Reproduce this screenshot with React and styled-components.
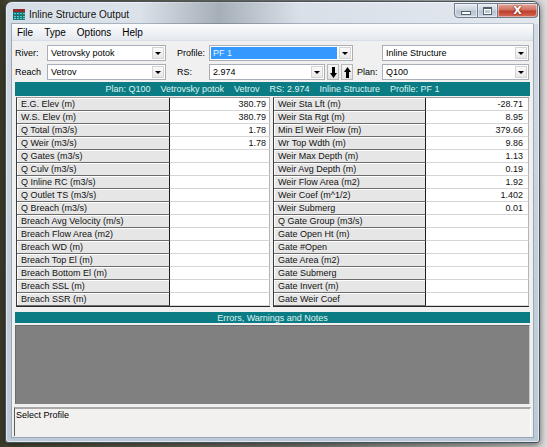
import React from 'react';
import styled, { createGlobalStyle } from 'styled-components';

const Global = createGlobalStyle`
  html, body { margin: 0; padding: 0; }
  body {
    width: 547px; height: 447px; overflow: hidden;
    font-family: "Liberation Sans", Arial, sans-serif;
  }
`;

const Desktop = styled.div`
  width: 547px; height: 447px; box-sizing: border-box; overflow: hidden;
  padding: 1px 0 0 5px;
  background: linear-gradient(90deg, #3b3a27 0px, #4a4833 8px, #5d5b48 120px, #7b7b74 300px, #b9b9b6 480px, #dcdcdc 547px);
`;

const Window = styled.div`
  width: 535px; height: 442px; box-sizing: border-box;
  border: 1px solid #46535f;
  border-radius: 7px 7px 3px 3px;
  background: linear-gradient(180deg, #d5dde6 0%, #c3cfdb 60%, #bccad8 100%);
  box-shadow: 0 2px 7px rgba(0,0,0,0.55), inset 0 0 0 1px rgba(255,255,255,0.55);
  display: flex; flex-direction: column;
  padding: 0 6px 5px 6px;
`;

const TitleBar = styled.div`
  height: 22px; flex: none;
  display: flex; align-items: center;
  position: relative;
  margin: 0 -6px; padding: 0 6px;
  border-radius: 6px 6px 0 0;
  background: linear-gradient(90deg, rgba(255,255,255,0) 0%, rgba(255,255,255,0.15) 25%, rgba(80,88,96,0.35) 40%, rgba(255,255,255,0.1) 55%, rgba(255,255,255,0.35) 100%);
`;

const TitleIcon = styled.svg`
  width: 12px; height: 11px; margin-left: 1px; margin-top: 2px; flex: none;
`;

const TitleText = styled.span`
  margin-left: 4px; margin-top: 2px;
  font-size: 10px; color: #111;
  text-shadow: 0 0 6px rgba(255,255,255,0.9);
`;

const Controls = styled.div`
  position: absolute; right: 1px; top: 1px;
  display: flex;
`;

const CaptionBtn = styled.div`
  height: 15px; width: ${p => p.$w}px; box-sizing: border-box;
  border: 1px solid #6f7d8c;
  border-left-width: ${p => (p.$first ? 1 : 0)}px;
  border-radius: ${p => p.$r};
  display: flex; align-items: center; justify-content: center;
  background: ${p => p.$close
    ? 'linear-gradient(180deg, #e5a99d 0%, #d0705f 45%, #bf3f2c 55%, #d36a55 100%)'
    : 'linear-gradient(180deg, #e6ecf2 0%, #cdd6df 45%, #b8c4d0 55%, #cad5e0 100%)'};
  box-shadow: inset 0 0 0 1px rgba(255,255,255,0.45);
`;

const MinGlyph = styled.div`
  width: 8px; height: 2px; background: #fff; border: 1px solid #56606a; margin-top: 5px;
`;

const MaxGlyph = styled.div`
  width: 7px; height: 5px; border: 1px solid #56606a; border-top-width: 2px;
  box-shadow: inset 0 0 0 1px #fff;
`;

const CloseGlyph = styled.span`
  color: #fff; font-size: 11px; font-weight: bold;
  font-family: "DejaVu Sans", sans-serif;
  text-shadow: 0 0 1px #7a1a10, 0 0 2px #7a1a10;
  line-height: 1;
`;

const Client = styled.div`
  flex: 1; background: #f0f0f0;
  display: flex; flex-direction: column;
  box-shadow: 0 0 0 1px #9aa8b6;
`;

const MenuBar = styled.div`
  height: 17px; flex: none; box-sizing: border-box;
  display: flex; align-items: center; gap: 11px;
  padding-left: 5px;
  background: linear-gradient(180deg, #fbfcfd 0%, #eef1f5 60%, #e4e8ee 100%);
  border-bottom: 1px solid #d8dee6;
`;

const MenuItem = styled.span`
  font-size: 10px; color: #000;
`;

const Body = styled.div`
  flex: 1; display: flex; flex-direction: column;
  padding: 4px 3px 0 3px;
`;

const SelectorGrid = styled.div`
  display: grid;
  grid-template-columns: 32px 119px 43px 144px 29px 147px;
  grid-template-rows: 16px 16px;
  row-gap: 3px;
  align-items: center;
`;

const FieldLabel = styled.span`
  font-size: 9px; color: #000;
  padding-left: ${p => p.$pad || 0}px;
`;

const Combo = styled.div`
  height: 16px; box-sizing: border-box;
  border: 1px solid #a9afb6;
  background: #fff;
  display: flex; align-items: stretch;
  flex: ${p => (p.$grow ? 1 : 'none')};
`;

const ComboText = styled.div`
  flex: 1; display: flex; align-items: center;
  font-size: 9px;
  padding-left: 2px; margin: 1px;
  background: ${p => (p.$selected ? '#3399ff' : 'transparent')};
  color: ${p => (p.$selected ? '#e8f2ff' : '#000')};
  white-space: nowrap; overflow: hidden;
`;

const DropBtn = styled.div`
  width: 10px; flex: none; margin: 1px;
  background: linear-gradient(180deg, #fafafa 0%, #e8e8e8 100%);
  border: 1px solid #d4d4d4;
  display: flex; align-items: center; justify-content: center;
  &::after {
    content: ""; display: block;
    border-left: 3px solid transparent; border-right: 3px solid transparent;
    border-top: 3px solid #000;
    margin-top: 1px;
  }
`;

const RSGroup = styled.div`
  display: flex; align-items: center; gap: 2px;
`;

const ArrowBtn = styled.div`
  width: 12px; height: 16px; box-sizing: border-box; flex: none;
  border: 1px solid #b8b8b8;
  background: linear-gradient(180deg, #f6f6f6 0%, #e2e2e2 100%);
  display: flex; align-items: center; justify-content: center;
`;

const InfoBar = styled.div`
  height: 14px; margin-top: 2px; flex: none;
  background: #0b7c83;
  color: #dff2f2;
  font-size: 9px;
  display: flex; align-items: center; justify-content: center;
  white-space: pre;
`;

const Tables = styled.div`
  display: grid;
  grid-template-columns: 254px 256px;
  column-gap: 3px;
  margin: 1px 0 0 1px;
`;

const Table = styled.div`
  display: grid;
  grid-template-columns: ${p => p.$label}px 1fr;
  grid-auto-rows: 13px;
  border-left: 1px solid #3a3a3a;
  border-top: 1px solid #9a9a9a;
  border-bottom: 1px solid #2a2a2a;
`;

const LabelCell = styled.div`
  box-sizing: border-box;
  background: #e6e6e6;
  border-bottom: 1px solid #6c6c6c;
  border-right: 1px solid #1e1e1e;
  box-shadow: inset 1px 1px 0 #ffffff;
  font-size: 9px; color: #111;
  padding-left: 4px;
  display: flex; align-items: center;
  white-space: nowrap; overflow: hidden;
`;

const ValueCell = styled.div`
  box-sizing: border-box;
  background: #fff;
  border-bottom: 1px solid #d6d6d6;
  border-right: 1px solid #b4b4b4;
  font-size: 9px; color: #111;
  padding-right: ${p => p.$pr}px;
  display: flex; align-items: center; justify-content: flex-end;
`;

const NotesBar = styled.div`
  height: 11px; margin-top: 5px; flex: none;
  background: #0b7c83;
  color: #dff2f2;
  font-size: 9px;
  display: flex; align-items: center; justify-content: center;
`;

const NotesArea = styled.div`
  height: 79px; margin-top: 2px; flex: none;
  background: #808080;
  border-top: 1px solid #6a6a6a;
  border-left: 1px solid #6a6a6a;
  border-right: 1px solid #c8c8c8;
  box-sizing: border-box;
`;

const StatusBox = styled.div`
  flex: 1; margin: 3px -1px 1px -1px; box-sizing: border-box;
  border-top: 2px solid #a8a8a8;
  border-left: 1px solid #5a5a5a;
  border-right: 1px solid #ffffff;
  background: #f2f1f0;
  font-size: 9px; color: #000;
  padding: 1px 0 0 1px;
`;

const leftRows = [
  ['E.G. Elev (m)', '380.79'],
  ['W.S. Elev (m)', '380.79'],
  ['Q Total (m3/s)', '1.78'],
  ['Q Weir (m3/s)', '1.78'],
  ['Q Gates (m3/s)', ''],
  ['Q Culv (m3/s)', ''],
  ['Q Inline RC (m3/s)', ''],
  ['Q Outlet TS (m3/s)', ''],
  ['Q Breach (m3/s)', ''],
  ['Breach Avg Velocity (m/s)', ''],
  ['Breach Flow Area (m2)', ''],
  ['Breach WD (m)', ''],
  ['Breach Top El (m)', ''],
  ['Breach Bottom El (m)', ''],
  ['Breach SSL (m)', ''],
  ['Breach SSR (m)', ''],
];

const rightRows = [
  ['Weir Sta Lft (m)', '-28.71'],
  ['Weir Sta Rgt (m)', '8.95'],
  ['Min El Weir Flow (m)', '379.66'],
  ['Wr Top Wdth (m)', '9.86'],
  ['Weir Max Depth (m)', '1.13'],
  ['Weir Avg Depth (m)', '0.19'],
  ['Weir Flow Area (m2)', '1.92'],
  ['Weir Coef (m^1/2)', '1.402'],
  ['Weir Submerg', '0.01'],
  ['Q Gate Group (m3/s)', ''],
  ['Gate Open Ht (m)', ''],
  ['Gate #Open', ''],
  ['Gate Area (m2)', ''],
  ['Gate Submerg', ''],
  ['Gate Invert (m)', ''],
  ['Gate Weir Coef', ''],
];

const AppIcon = () => (
  <TitleIcon viewBox="0 0 12 11">
    <rect x="0" y="0" width="12" height="11" fill="#1c6f73" />
    <rect x="0" y="0" width="12" height="3" fill="#8e2a2a" />
    {[1, 4, 7, 10].map(x =>
      [4, 7, 9].map(y => (
        <rect key={`${x}-${y}`} x={x} y={y} width="2" height="1.2" fill="#4fd0c8" />
      ))
    )}
  </TitleIcon>
);

const DownArrow = () => (
  <svg width="7" height="11" viewBox="0 0 7 11">
    <path d="M2 0h3v6h2L3.5 11 0 6h2z" fill="#000" />
  </svg>
);

const UpArrow = () => (
  <svg width="7" height="11" viewBox="0 0 7 11">
    <path d="M2 11h3V5h2L3.5 0 0 5h2z" fill="#000" />
  </svg>
);

const Select = ({ value, selected, grow }) => (
  <Combo $grow={grow}>
    <ComboText $selected={selected}>{value}</ComboText>
    <DropBtn />
  </Combo>
);

const DataTable = ({ rows, label, pr }) => (
  <Table $label={label}>
    {rows.map(([l, v]) => (
      <React.Fragment key={l}>
        <LabelCell>{l}</LabelCell>
        <ValueCell $pr={pr}>{v}</ValueCell>
      </React.Fragment>
    ))}
  </Table>
);

export default function App() {
  return (
    <Desktop>
      <Global />
      <Window>
        <TitleBar>
          <AppIcon />
          <TitleText>Inline Structure Output</TitleText>
          <Controls>
            <CaptionBtn $w={24} $first $r="0 0 0 4px"><MinGlyph /></CaptionBtn>
            <CaptionBtn $w={20} $r="0"><MaxGlyph /></CaptionBtn>
            <CaptionBtn $w={40} $close $r="0 0 4px 0"><CloseGlyph>X</CloseGlyph></CaptionBtn>
          </Controls>
        </TitleBar>
        <Client>
          <MenuBar>
            <MenuItem>File</MenuItem>
            <MenuItem>Type</MenuItem>
            <MenuItem>Options</MenuItem>
            <MenuItem>Help</MenuItem>
          </MenuBar>
          <Body>
            <SelectorGrid>
              <FieldLabel>River:</FieldLabel>
              <Select value="Vetrovsky potok" />
              <FieldLabel $pad={11}>Profile:</FieldLabel>
              <Select value="PF 1" selected />
              <span />
              <Select value="Inline Structure" />

              <FieldLabel>Reach</FieldLabel>
              <Select value="Vetrov" />
              <FieldLabel $pad={11}>RS:</FieldLabel>
              <RSGroup>
                <Select value="2.974" grow />
                <ArrowBtn><DownArrow /></ArrowBtn>
                <ArrowBtn><UpArrow /></ArrowBtn>
              </RSGroup>
              <FieldLabel $pad={4}>Plan:</FieldLabel>
              <Select value="Q100" />
            </SelectorGrid>

            <InfoBar>{'Plan: Q100    Vetrovsky potok    Vetrov    RS: 2.974    Inline Structure    Profile: PF 1'}</InfoBar>

            <Tables>
              <DataTable rows={leftRows} label={153} pr={3} />
              <DataTable rows={rightRows} label={152} pr={5} />
            </Tables>

            <NotesBar>Errors, Warnings and Notes</NotesBar>
            <NotesArea />
            <StatusBox>Select Profile</StatusBox>
          </Body>
        </Client>
      </Window>
    </Desktop>
  );
}
